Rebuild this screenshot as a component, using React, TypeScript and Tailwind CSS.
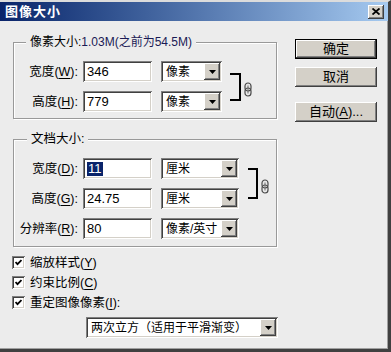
import React from "react";

const FONT = { fontFamily: '"Liberation Sans", "Noto Sans CJK SC", sans-serif' };

const sunken =
  "shadow-[inset_1px_1px_0_#808080,inset_-1px_-1px_0_#ffffff,inset_2px_2px_0_#404040,inset_-2px_-2px_0_#d4d0c8]";
const raised =
  "shadow-[inset_-1px_-1px_0_#404040,inset_1px_1px_0_#ffffff,inset_-2px_-2px_0_#808080]";

function Arrow() {
  return (
    <div className={`w-[16px] self-stretch my-[2px] mr-[2px] bg-[#d4d0c8] ${raised} flex items-center justify-center shrink-0`}>
      <svg width="7" height="4" viewBox="0 0 7 4">
        <polygon points="0,0 7,0 3.5,4" fill="#000" />
      </svg>
    </div>
  );
}

function Select({ w, text }: { w: string; text: string }) {
  return (
    <div className={`${w} h-[21px] bg-white ${sunken} flex items-stretch`}>
      <div className="flex-1 flex items-center pl-[5px] whitespace-nowrap text-[12px]">{text}</div>
      <Arrow />
    </div>
  );
}

function Field({ value, selected }: { value: string; selected?: boolean }) {
  return (
    <div className={`w-[69px] h-[21px] bg-white ${sunken} flex items-center pl-[4px] text-[13px]`}>
      {selected ? <span className="bg-[#0a246a] text-white px-[1px]">{value}</span> : <span>{value}</span>}
    </div>
  );
}

function Label({ cn, k }: { cn: string; k: string }) {
  return (
    <div className="w-[64px] text-right whitespace-nowrap text-[12.5px]">
      {cn}(<span className="underline underline-offset-2">{k}</span>):
    </div>
  );
}

function Link() {
  return (
    <svg width="8" height="15" viewBox="0 0 8 15">
      <rect x="1" y="1" width="6" height="8" rx="3" fill="#e8e8e8" stroke="#4a4a4a" strokeWidth="1.2" />
      <rect x="1" y="6" width="6" height="8" rx="3" fill="none" stroke="#4a4a4a" strokeWidth="1.2" />
      <line x1="4" y1="3.5" x2="4" y2="11.5" stroke="#6a6a6a" />
    </svg>
  );
}

function Check({ children }: { children: React.ReactNode }) {
  return (
    <div className="flex items-center h-[13px] -ml-[1px]">
      <div className={`w-[13px] h-[13px] bg-white ${sunken} flex items-center justify-center`}>
        <svg width="7" height="7" viewBox="0 0 7 7">
          <polyline points="0.5,3 2.5,5.2 6.5,1" fill="none" stroke="#000" strokeWidth="1.8" />
        </svg>
      </div>
      <div className="ml-[5px] whitespace-nowrap leading-[14px] text-[12.5px]">{children}</div>
    </div>
  );
}

function Button({ children, def }: { children: React.ReactNode; def?: boolean }) {
  return (
    <div
      className={`w-[82px] h-[20px] bg-[#d4d0c8] flex items-center justify-center text-[13px] ${
        def ? "border border-black" : ""
      } ${raised}`}
    >
      {children}
    </div>
  );
}

export default function App() {
  return (
    <div
      style={FONT}
      className="w-[391px] h-[352px] bg-[#ececec] text-[12px] leading-[14px] text-black border-t-2 border-t-[#dcdcdc] border-r-[3px] border-b-[3px] border-r-[#404040] border-b-[#404040] shadow-[inset_-1px_-1px_0_#a0a0a0] flex flex-col overflow-hidden"
    >
      <div className="h-[19px] flex items-center bg-gradient-to-r from-[#0a246a] to-[#a6caf0] pl-[5px] pr-[4px]">
        <div className="text-white font-bold text-[13px] tracking-[1px]">图像大小</div>
        <div className={`ml-auto w-[16px] h-[14px] bg-[#d4d0c8] ${raised} flex items-center justify-center`}>
          <svg width="8" height="7" viewBox="0 0 8 7">
            <path d="M0.5 0.5 L7.5 6.5 M7.5 0.5 L0.5 6.5" stroke="#000" strokeWidth="1.8" />
          </svg>
        </div>
      </div>

      <div className="flex">
        <div className="ml-[13px] w-[265px] flex flex-col">
          <div className="mt-[21px] w-[264px] border border-[#999] shadow-[1px_1px_0_#fff,inset_1px_1px_0_#fff] flex flex-col pb-[6px]">
            <div className="-mt-[8px] ml-[12px] px-[4px] w-fit bg-[#ececec] h-[14px] whitespace-nowrap">
              像素大小:<span className="text-[#1a1a55]">1.03M(之前为54.5M)</span>
            </div>
            <div className="mt-[12px] flex items-center">
              <div className="flex flex-col gap-[9px]">
                <div className="flex items-center h-[21px]">
                  <Label cn="宽度" k="W" />
                  <div className="ml-[5px]"><Field value="346" /></div>
                  <div className="ml-[9px]"><Select w="w-[61px]" text="像素" /></div>
                </div>
                <div className="flex items-center h-[21px]">
                  <Label cn="高度" k="H" />
                  <div className="ml-[5px]"><Field value="779" /></div>
                  <div className="ml-[9px]"><Select w="w-[61px]" text="像素" /></div>
                </div>
              </div>
              <div className="ml-[8px] w-[11px] h-[28px] border-t-2 border-r-2 border-b-2 border-black" />
              <div className="ml-[3px] mt-[6px]"><Link /></div>
            </div>
          </div>

          <div className="mt-[20px] w-[264px] border border-[#999] shadow-[1px_1px_0_#fff,inset_1px_1px_0_#fff] flex flex-col pb-[7px]">
            <div className="-mt-[8px] ml-[13px] px-[4px] w-fit bg-[#ececec] h-[14px] whitespace-nowrap text-[12.5px]">文档大小:</div>
            <div className="mt-[12px] flex flex-col gap-[9px]">
              <div className="flex items-center">
                <div className="flex flex-col gap-[9px]">
                  <div className="flex items-center h-[21px]">
                    <Label cn="宽度" k="D" />
                    <div className="ml-[5px]"><Field value="11" selected /></div>
                    <div className="ml-[9px]"><Select w="w-[78px]" text="厘米" /></div>
                  </div>
                  <div className="flex items-center h-[21px]">
                    <Label cn="高度" k="G" />
                    <div className="ml-[5px]"><Field value="24.75" /></div>
                    <div className="ml-[9px]"><Select w="w-[78px]" text="厘米" /></div>
                  </div>
                </div>
                <div className="ml-[9px] w-[10px] h-[31px] border-t-2 border-r-2 border-b-2 border-black" />
                <div className="ml-[3px] mt-[6px]"><Link /></div>
              </div>
              <div className="flex items-center h-[21px]">
                <Label cn="分辨率" k="R" />
                <div className="ml-[5px]"><Field value="80" /></div>
                <div className="ml-[9px]"><Select w="w-[78px]" text="像素/英寸" /></div>
              </div>
            </div>
          </div>

          <div className="mt-[9px] flex flex-col gap-[7px]">
            <Check>缩放样式(<span className="underline underline-offset-2">Y</span>)</Check>
            <Check>约束比例(<span className="underline underline-offset-2">C</span>)</Check>
            <Check>重定图像像素(<span className="underline underline-offset-2">I</span>):</Check>
          </div>

          <div className="mt-[8px] ml-[73px]">
            <Select w="w-[192px]" text="两次立方（适用于平滑渐变）" />
          </div>
        </div>

        <div className="ml-[17px] mt-[18px] flex flex-col">
          <Button def>确定</Button>
          <div className="mt-[8px]"><Button>取消</Button></div>
          <div className="mt-[15px]">
            <Button>
              自动(<span className="underline underline-offset-2">A</span>)...
            </Button>
          </div>
        </div>
      </div>
    </div>
  );
}
